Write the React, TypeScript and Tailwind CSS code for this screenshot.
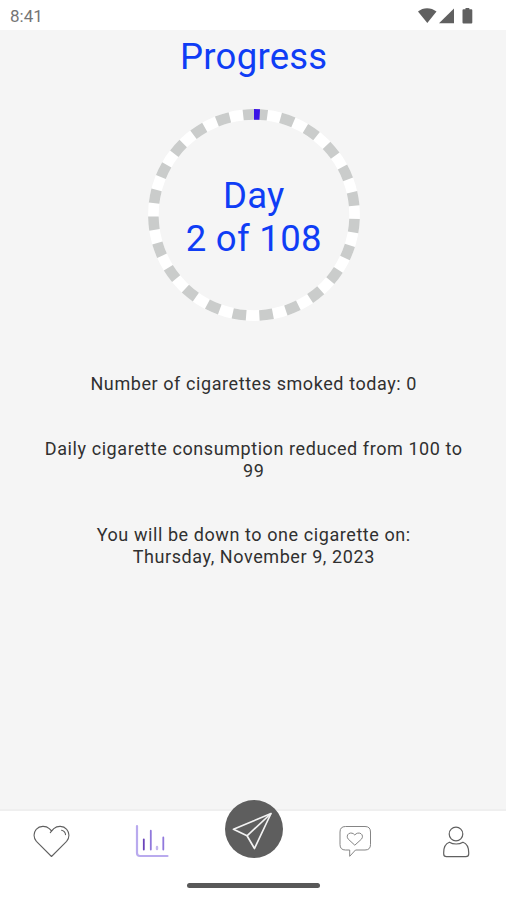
import type { ReactNode } from 'react';

const RADIUS = 100.6;
const CIRCUMFERENCE = 2 * Math.PI * RADIUS;

const StatusBar = () => (
  <header className="flex h-[30px] shrink-0 items-center justify-between bg-white pl-[10px] pr-[33px] text-[#757575]">
    <span className="text-[17px] leading-[30px] pt-px">8:41</span>
    <svg width="55" height="18" viewBox="0 0 55 18" fill="#606060" className="mt-px">
      <path d="M0 4.6C5 .1 13 .1 18.5 4.6L9.3 16Z" />
      <path d="M36 1.4V16.2H21Z" />
      <path d="M44.5 3.2q0-1 1-1h2V1h3.8v1.2h2q1 0 1 1V15.400q0 1-1 1h-7.800q-1 0-1-1Z" />
    </svg>
  </header>
);

const ProgressRing = ({ day, total }: { day: number; total: number }) => {
  const done = ((day - 1) / total) * CIRCUMFERENCE;

  return (
    <div className="relative mt-[29px] h-[214px] w-[214px]">
      <svg width="214" height="214" viewBox="0 0 214 214" fill="none" strokeWidth="10.6">
        <g transform="rotate(-90 107 107)">
          <circle cx="107" cy="107" r={RADIUS} stroke="#ffffff" />
          <circle cx="107" cy="107" r={RADIUS} stroke="#cacccb" strokeDasharray="13.48 13.48" />
          <circle cx="107" cy="107" r={RADIUS} stroke="#3a12e6" strokeDasharray={`${done} ${CIRCUMFERENCE}`} />
        </g>
      </svg>
      <div className="absolute inset-0 flex flex-col items-center justify-center pt-[4px] text-center text-[36.5px] leading-[43px] tracking-[0.3px] text-[#0f3df5]">
        <span>Day</span>
        <span>
          {day} of {total}
        </span>
      </div>
    </div>
  );
};

const NavItem = ({ label, children }: { label: string; children: ReactNode }) => (
  <button aria-label={label} className="flex h-[60px] flex-1 items-center justify-center">
    {children}
  </button>
);

const BottomNav = () => (
  <nav className="flex h-[91px] shrink-0 flex-col items-center border-t-2 border-[#efefef] bg-white">
    <div className="flex w-full">
      <NavItem label="Home">
        <svg width="40" height="40" viewBox="0 0 40 40" fill="none" stroke="#606060" strokeWidth="1.1" strokeLinejoin="round" strokeLinecap="round">
          <path d="M20.500 35.500 5.400 20.400C2.300 17 2.300 11.700 5.200 8.300C8.800 4.500 14.800 4.500 18.300 7.700L20.600 10L22.800 7.700C26.400 4.500 32.300 4.500 35.700 8.300C38.700 11.700 38.700 17 35.600 20.400Z" />
          <path d="M20.600 10 19.300 11.600M30.600 9.200C33 9.800 34.400 11.400 34.500 13.600" />
        </svg>
      </NavItem>
      <NavItem label="Progress">
        <svg width="40" height="40" viewBox="0 0 40 40" fill="none" strokeLinecap="round">
          <path d="M5 5V32Q5 35 8 35H35.500" stroke="#b9aaee" strokeWidth="2.200" />
          <path d="M11.800 18.500V28.500" stroke="#6a43ba" strokeWidth="1.800" />
          <path d="M18.800 9.700V28.500M31.300 16.500V28.500" stroke="#9078dc" strokeWidth="1.800" />
          <path d="M25 26V28" stroke="#c4b8ed" strokeWidth="2.400" />
        </svg>
      </NavItem>
      <div className="flex flex-1 justify-center">
        <button aria-label="Send" className="-mt-[11px] h-[58px] w-[58px] translate-x-px rounded-full bg-[#5e5e5e]">
          <svg width="58" height="58" viewBox="0 0 58 58" fill="none" stroke="#f2f2f2" strokeWidth="1.700" strokeLinejoin="round">
            <path d="M46 13.500 8.500 29.300 22 35.800 29.500 48.500Z" />
            <path d="M46 13.500 22 35.800" />
          </svg>
        </button>
      </div>
      <NavItem label="Support">
        <svg width="40" height="40" viewBox="-1 0 40 40" fill="none" stroke="#858585" strokeWidth="1" strokeLinejoin="round">
          <path d="M10.500 5.500H30Q35.500 5.500 35.500 11V23.500Q35.500 29 30 29H20.500L14.700 35.300V29H10.500Q5 29 5 23.500V11Q5 5.500 10.500 5.500Z" />
          <path d="M19.800 24.200 13.300 18.200C11.700 16.400 12 13.800 13.700 12.700C15.800 11.400 18.400 12.100 19.800 14C21.200 12.100 23.900 11.400 26 12.700C27.700 13.800 28 16.400 26.400 18.200Z" />
        </svg>
      </NavItem>
      <NavItem label="Profile">
        <svg width="40" height="40" viewBox="-1 0 40 40" fill="none" stroke="#606060" strokeWidth="1.200" strokeLinejoin="round">
          <circle cx="20" cy="13" r="6.800" />
          <path d="M13.400 21.200C9.700 22.500 7.700 26 7.700 31.500V33Q7.700 35.700 10.500 35.700H29.800Q32.700 35.700 32.700 33V31.500C32.700 26 30.600 22.500 27 21.200C23 23.600 17.300 23.600 13.400 21.200Z" />
        </svg>
      </NavItem>
    </div>
    <div className="mt-[12px] h-[5px] w-[133px] rounded-full bg-[#585858]" />
  </nav>
);

const App = () => {
  return (
    <div className="flex h-[900px] w-[506px] flex-col overflow-hidden bg-[#f5f5f5] font-['Roboto',sans-serif]">
      <StatusBar />

      <main className="flex flex-1 flex-col items-center pl-[1.5px] text-center">
        <h1 className="mt-[5px] text-[36.5px] leading-[44px] tracking-[0.25px] text-[#0f3df5]">Progress</h1>
        <ProgressRing day={2} total={108} />

        {/* Stats */}
        <div className="mt-[51.4px] flex w-[440px] flex-col text-[18px] leading-[21.6px] tracking-[0.58px] text-[#303030]">
          <p>Number of cigarettes smoked today: 0</p>
          <p className="mt-[43px]">Daily cigarette consumption reduced from 100 to 99</p>
          <p className="mt-[43px]">
            You will be down to one cigarette on:
            <br />
            Thursday, November 9, 2023
          </p>
        </div>
      </main>

      <BottomNav />
    </div>
  );
};

export default App;
